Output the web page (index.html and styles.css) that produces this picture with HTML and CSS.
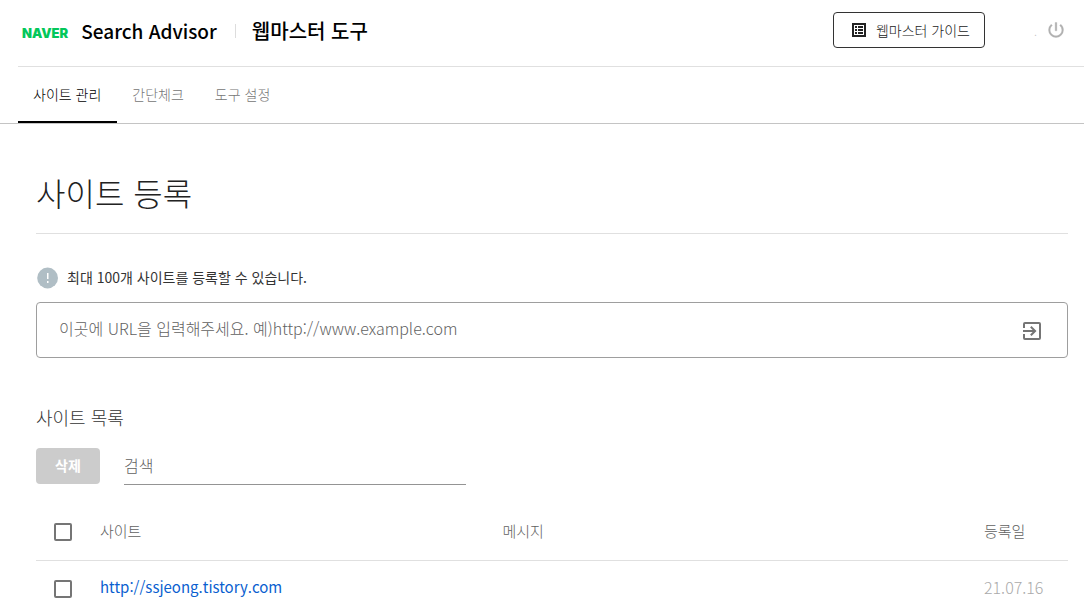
FILE: index.html
```html
<!DOCTYPE html>
<html lang="ko">
<head>
    <meta charset="UTF-8">
    <meta name="viewport" content="width=device-width, initial-scale=1.0">
    <title>네이버 서치어드바이저</title>
    <link rel="stylesheet" href="styles.css">
</head>
<body>

    <header class="header">
        <div class="brand">
            <a class="naver" href="#">NAVER</a>
            <a class="service" href="#">Search Advisor</a>
            <a class="tool" href="#">웹마스터 도구</a>
        </div>
        <div class="header-right">
            <button class="guide-btn" type="button">
                <svg width="18" height="18" viewBox="0 0 18 18" fill="currentColor"><path fill-rule="evenodd" d="M2 2h14v14H2zM4 4v10h10V4z"/><path d="M5 5h2v2H5zM5 8h2v2H5zM5 11h2v2H5zM8 5h5v2H8zM8 8h5v2H8zM8 11h5v2H8z"/></svg>
                웹마스터 가이드
            </button>
            <span class="user">.</span>
            <button class="power-btn" type="button" aria-label="로그아웃">
                <svg width="20" height="20" viewBox="0 0 24 24" fill="currentColor" stroke="currentColor" stroke-width="0.4"><path d="M13 3h-2v10h2V3zm4.83 2.17l-1.42 1.42A6.92 6.92 0 0 1 19 12c0 3.87-3.13 7-7 7s-7-3.13-7-7c0-2.18 1-4.12 2.58-5.42L6.17 5.17A8.93 8.93 0 0 0 3 12a9 9 0 0 0 18 0c0-2.74-1.23-5.18-3.17-6.83z"/></svg>
            </button>
        </div>
    </header>

    <nav class="tabs">
        <a class="tab active" href="#">사이트 관리</a>
        <a class="tab" href="#">간단체크</a>
        <a class="tab" href="#">도구 설정</a>
    </nav>

    <main class="content">
        <h1>사이트 등록</h1>

        <!-- 사이트 등록 -->
        <div class="notice">
            <svg width="24" height="24" viewBox="0 0 24 24"><circle cx="11.6" cy="12" r="10.4" fill="#b0bec5"/><path d="M11 7h1.5v6H11zM11 15h1.5v2H11z" fill="#fff"/></svg>
            <p>최대 100개 사이트를 등록할 수 있습니다.</p>
        </div>
        <form class="url-form">
            <input type="text" class="url-input" aria-label="사이트 URL" placeholder="이곳에 URL을 입력해주세요. 예)http://www.example.com">
            <button class="submit-btn" type="button" aria-label="등록">
                <svg width="24" height="24" viewBox="0 0 24 24" fill="currentColor"><path d="M10.09 15.59L11.5 17l5-5-5-5-1.41 1.41L12.67 11H3v2h9.67l-2.58 2.59zM19 3H5a2 2 0 0 0-2 2v4h2V5h14v14H5v-4H3v4a2 2 0 0 0 2 2h14a2 2 0 0 0 2-2V5a2 2 0 0 0-2-2z"/></svg>
            </button>
        </form>

        <!-- 사이트 목록 -->
        <h2>사이트 목록</h2>
        <div class="toolbar">
            <button class="delete-btn" type="button" disabled>삭제</button>
            <input type="text" class="search-input" aria-label="검색" placeholder="검색">
        </div>

        <table class="site-table">
            <thead>
                <tr>
                    <th class="col-check"><input type="checkbox" aria-label="전체 선택"></th>
                    <th class="col-site">사이트</th>
                    <th>메시지</th>
                    <th class="col-date">등록일</th>
                </tr>
            </thead>
            <tbody>
                <tr>
                    <td class="col-check"><input type="checkbox" aria-label="http://ssjeong.tistory.com 선택"></td>
                    <td><a href="#">http://ssjeong.tistory.com</a></td>
                    <td></td>
                    <td class="date">21.07.16</td>
                </tr>
            </tbody>
        </table>
    </main>

</body>
</html>
```
FILE: styles.css
```css
* {
    box-sizing: border-box;
}

body {
    margin: 0;
    background-color: #fff;
    color: #424242;
    font-family: "Noto Sans CJK KR", sans-serif;
    font-weight: 300;
    font-size: 14px;
}

a {
    color: inherit;
    text-decoration: none;
}

button, input {
    font-family: inherit;
    font-weight: inherit;
}

button {
    padding: 0;
    border: none;
    background: none;
    cursor: pointer;
}

svg {
    display: block;
    flex: none;
}

.header {
    display: flex;
    align-items: center;
    justify-content: space-between;
    height: 67px;
    margin-left: 18px;
    padding: 0 18px 6px 4px;
    border-bottom: 1px solid #e0e0e0;
}

.brand {
    display: flex;
    align-items: center;
    padding-top: 2px;
    color: #000;
    font-size: 20px;
    font-weight: 500;
    line-height: 28px;
    white-space: nowrap;
}

.naver {
    margin-right: 13px;
    padding-top: 4px;
    color: #03c75a;
    font-family: Inter, sans-serif;
    font-size: 13px;
    font-weight: 900;
}

.service {
    font-size: 19px;
}

.tool {
    display: flex;
    align-items: center;
}

.tool::before {
    content: "";
    width: 1px;
    height: 14px;
    margin: 0 16px 0 18px;
    background-color: #ddd;
}

.header-right {
    display: flex;
    align-items: center;
}

.guide-btn {
    display: flex;
    align-items: center;
    gap: 8px;
    height: 36px;
    padding: 0 14px 0 16px;
    border: 1px solid #333;
    border-radius: 4px;
    color: #222;
    font-size: 14px;
    line-height: 20px;
    white-space: nowrap;
}

.user {
    margin-left: 49px;
    color: #bbb;
    font-size: 12px;
}

.power-btn {
    margin-left: 9px;
    color: #b0b0b0;
}

.tabs {
    display: flex;
    height: 57px;
    padding-left: 18px;
    border-bottom: 1px solid #c4c4c4;
}

.tab {
    padding: 0 16px 0 15px;
    border-bottom: 2px solid transparent;
    color: #757575;
    font-size: 14px;
    line-height: 54px;
}

.tab.active {
    border-color: #000;
    color: #000;
}

.content {
    padding: 44px 16px 0 36px;
}

h1 {
    margin: 0;
    padding-bottom: 17px;
    border-bottom: 1px solid #e0e0e0;
    color: #222;
    font-size: 32px;
    font-weight: 300;
    line-height: 48px;
}

.notice {
    display: flex;
    gap: 7px;
    margin: 32px 0 12px;
}

.notice p {
    margin: 0;
    color: #333;
    font-size: 14px;
    font-weight: 400;
    line-height: 22px;
}

.url-form {
    display: flex;
    align-items: center;
    height: 56px;
    padding: 0 23px 0 22px;
    border: 1px solid #9e9e9e;
    border-radius: 4px;
}

.url-input {
    flex: 1;
    height: 52px;
    padding: 0 0 5px;
    border: none;
    outline: none;
    font-size: 16px;
}

input::placeholder {
    color: #616161;
    opacity: 1;
}

.submit-btn {
    padding-top: 2px;
    color: #757575;
}

h2 {
    margin: 45px 0 17px;
    color: #333;
    font-size: 18px;
    font-weight: 300;
    line-height: 28px;
}

.toolbar {
    display: flex;
    gap: 24px;
}

.delete-btn {
    width: 64px;
    height: 36px;
    padding-bottom: 2px;
    border-radius: 4px;
    background-color: #ccc;
    color: #fff;
    font-size: 14px;
    font-weight: 700;
}

.search-input {
    width: 342px;
    height: 37px;
    padding: 0 0 2px;
    border: none;
    border-bottom: 1px solid #949494;
    outline: none;
    font-size: 16px;
}

.site-table {
    width: 100%;
    margin-top: 19px;
    border-spacing: 0;
    table-layout: fixed;
    font-size: 15px;
}

.site-table th, .site-table td {
    height: 57px;
    padding: 0 0 4px 16px;
    border-bottom: 1px solid #e0e0e0;
    font-weight: 300;
    text-align: left;
}

.site-table td {
    padding-bottom: 5px;
}

.site-table th {
    color: #616161;
}

.site-table .col-check {
    width: 48px;
    padding: 0 0 0 18px;
}

.col-site {
    width: 39%;
}

.col-date {
    width: 100px;
}

.site-table a {
    color: #0b5fd0;
    font-weight: 400;
}

.site-table .date {
    color: #aaa;
    font-size: 16px;
}

input[type="checkbox"] {
    display: block;
    width: 18px;
    height: 18px;
    margin: 0;
    border: 2px solid #757575;
    border-radius: 2px;
    appearance: none;
}

input[type="checkbox"]:checked {
    background-color: #757575;
}
```
